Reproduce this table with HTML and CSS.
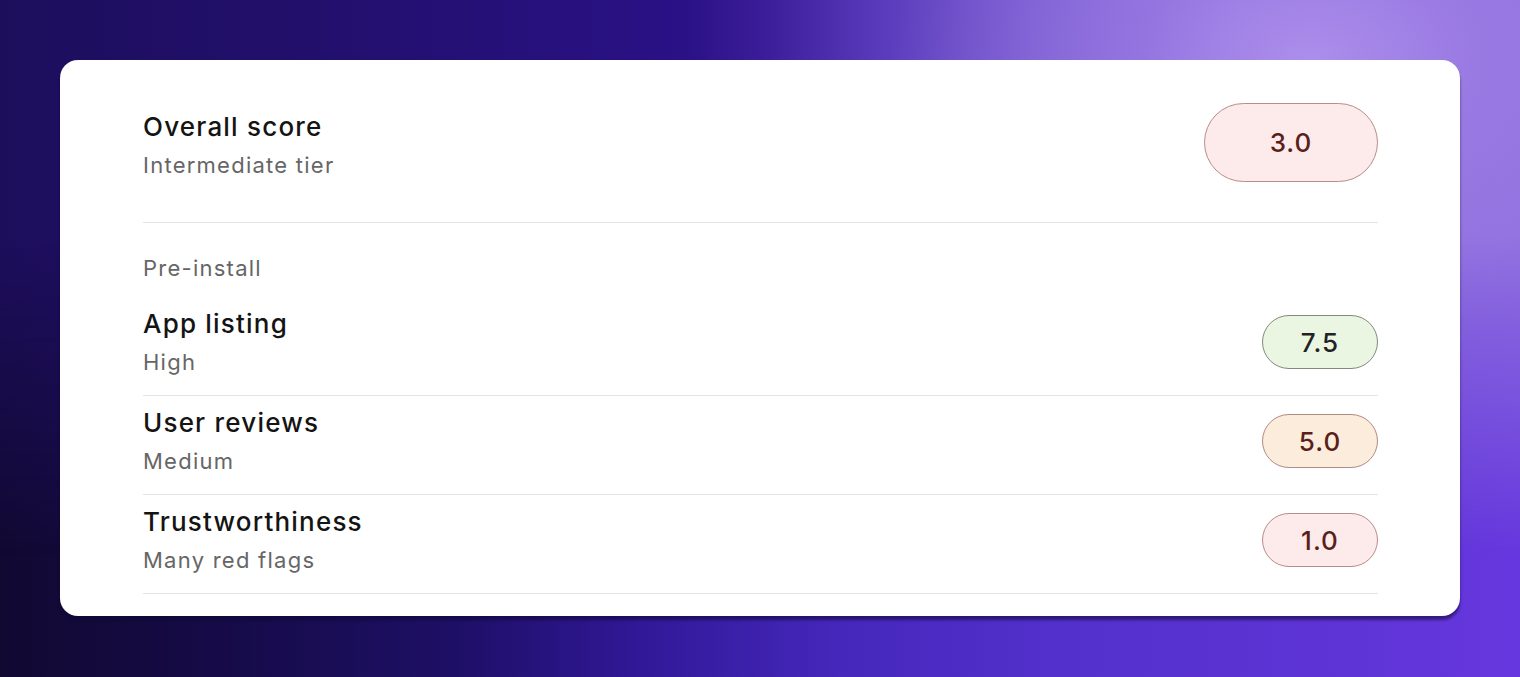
FILE: index.html
```html
<!DOCTYPE html>
<html lang="en">
<head>
<meta charset="utf-8">
<title>Score</title>
<link rel="stylesheet" href="styles.css">
</head>
<body>
<main class="stage">
  <section class="card">
    <div class="overall">
      <div class="text overall-text">
        <div class="title">Overall score</div>
        <div class="sub">Intermediate tier</div>
      </div>
      <div class="pill pill-lg pill-red">3.0</div>
    </div>
    <div class="group-label">Pre-install</div>
    <div class="row">
      <div class="text">
        <div class="title">App listing</div>
        <div class="sub">High</div>
      </div>
      <div class="pill pill-green">7.5</div>
    </div>
    <div class="row">
      <div class="text">
        <div class="title">User reviews</div>
        <div class="sub">Medium</div>
      </div>
      <div class="pill pill-orange">5.0</div>
    </div>
    <div class="row">
      <div class="text">
        <div class="title">Trustworthiness</div>
        <div class="sub">Many red flags</div>
      </div>
      <div class="pill pill-red">1.0</div>
    </div>
  </section>
</main>
</body>
</html>
```

FILE: styles.css
```css
* { box-sizing: border-box; }
html, body { margin: 0; padding: 0; }
body {
  position: relative;
  width: 1520px;
  height: 677px;
  overflow: hidden;
  font-family: Inter, "Noto Sans", "Liberation Sans", sans-serif;
  background: linear-gradient(90deg, #110932 0%, #160b48 15%, #1e0f66 30%, #301897 42%, #4527bb 55%, #5330cc 70%, #5c33d4 85%, #6637de 100%);
}
body::before {
  content: "";
  position: absolute;
  inset: 0;
  z-index: 0;
  background:
    radial-gradient(ellipse 420px 300px at 1310px 60px, rgba(172,142,235,1) 0%, rgba(160,128,230,0.6) 40%, rgba(150,118,225,0) 100%),
    linear-gradient(90deg, #1d0e5c 0%, #231070 25%, #2a1186 45%, #3a1c98 50%, #5a3bbb 58%, #7658cf 68%, #8a6bdb 80%, #8f70de 100%);
  -webkit-mask-image: linear-gradient(180deg, #000 0%, #000 35%, rgba(0,0,0,0) 82%);
  mask-image: linear-gradient(180deg, #000 0%, #000 35%, rgba(0,0,0,0) 82%);
}
.stage {
  position: relative;
  z-index: 1;
  padding: 60px;
}
.card {
  background: #fff;
  border-radius: 18px;
  padding: 43px 82px 22px 83px;
  box-shadow: 0 4px 3px rgba(15, 8, 50, 0.55);
}
.overall {
  display: flex;
  justify-content: space-between;
  align-items: flex-start;
  padding-bottom: 40px;
  border-bottom: 1px solid #e4e4e4;
}
.overall-text { padding-top: 8px; gap: 13px; }
.text { display: flex; flex-direction: column; gap: 8px; }
.title {
  font-size: 26px;
  line-height: 32px;
  font-weight: 500;
  color: #141414;
  letter-spacing: 1.2px;
}
.sub {
  font-size: 22px;
  line-height: 28px;
  color: #666;
  letter-spacing: 1.25px;
}
.group-label {
  font-size: 22px;
  line-height: 28px;
  color: #666;
  letter-spacing: 1.25px;
  margin-top: 31px;
  margin-bottom: 15px;
}
.row {
  display: flex;
  justify-content: space-between;
  align-items: center;
  padding: 11px 0 19px;
  border-bottom: 1px solid #e4e4e4;
}
.pill {
  width: 116px;
  height: 54px;
  border-radius: 27px;
  border: 1.5px solid #b58a8a;
  display: flex;
  align-items: center;
  justify-content: center;
  font-size: 26px;
  font-weight: 500;
  letter-spacing: 1px;
  color: #5a1f1a;
}
.pill-lg {
  width: 174px;
  height: 79px;
  border-radius: 40px;
}
.pill-red { background: #fdeaea; border-color: #b88c88; }
.pill-green { background: #eaf5e2; border-color: #818a7c; color: #222; }
.pill-orange { background: #fcecdc; border-color: #ad8c82; }
```
